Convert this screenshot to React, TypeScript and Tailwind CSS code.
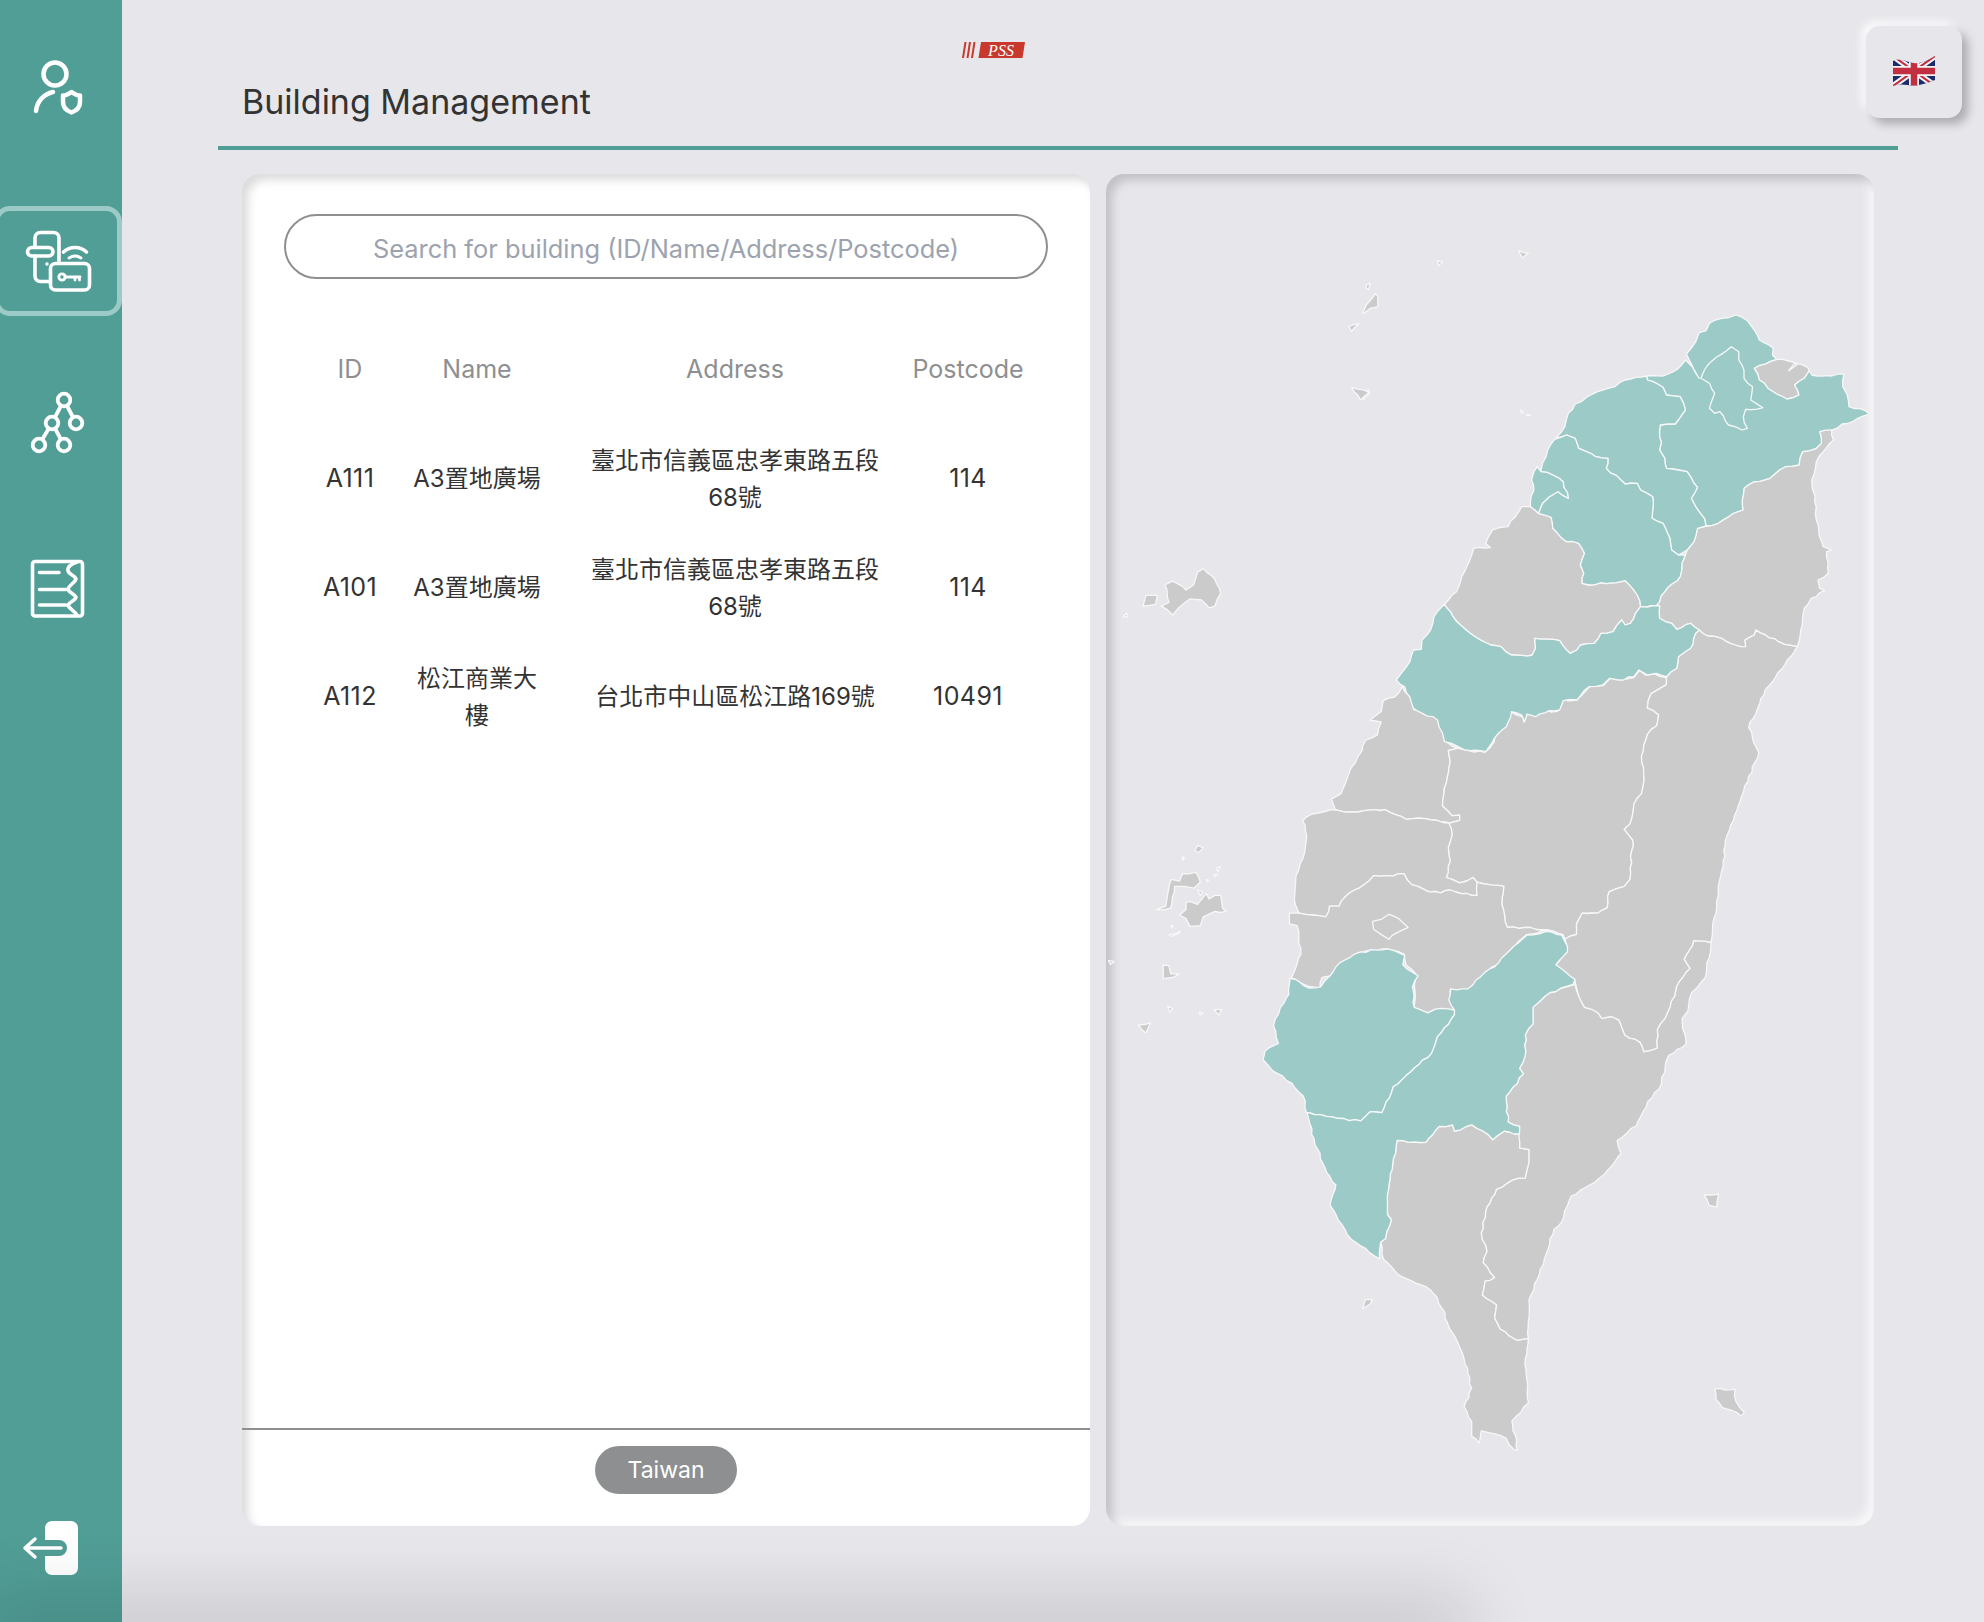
import React from 'react'

// The map is traced in a few local coordinate frames, then mapped to panel pixels
type Frame = [number, number, number, number]
const A: Frame = [1360, 280, 2.904, 3]
const B: Frame = [1100, 540, 2.613, 2.8]
const C: Frame = [1200, 900, 2.613, 2.703]
const S: Frame = [0, 0, 0.79028, 0.79028]

const PANEL_X = 1106
const PANEL_Y = 174

function noise(n: number) {
  const v = Math.sin(n * 127.1) * 43758.5453
  return (v - Math.floor(v)) * 2 - 1
}

// wiggle an edge so coast lines look hand-surveyed; neighbours sharing an edge get the same wiggle
function roughEdge(a: number[], b: number[]) {
  const flip = a[0] > b[0] || (a[0] === b[0] && a[1] > b[1])
  const [p, q] = flip ? [b, a] : [a, b]
  const dx = q[0] - p[0]
  const dy = q[1] - p[1]
  const len = Math.hypot(dx, dy)
  const steps = Math.floor(len / 5)
  const out: number[][] = []
  for (let i = 1; i < steps; i++) {
    const t = i / steps
    const off = noise(p[0] * 3.1 + p[1] * 7.7 + i * 1.37) * 1.1
    out.push([p[0] + dx * t - (dy / len) * off, p[1] + dy * t + (dx / len) * off])
  }
  return flip ? out.reverse() : out
}

function shape(...parts: [Frame, string][]) {
  const pts = parts.flatMap(([f, raw]) =>
    raw
      .trim()
      .split(/\s+/)
      .map((p) => {
        const [x, y] = p.split(',').map(Number)
        return [Number((f[0] + x / f[2] - PANEL_X).toFixed(1)), Number((f[1] + y / f[3] - PANEL_Y).toFixed(1))]
      })
  )
  const out: number[][] = []
  pts.forEach((p, i) => {
    out.push(p, ...roughEdge(p, pts[(i + 1) % pts.length]))
  })
  return out.map((p) => `${p[0].toFixed(1)},${p[1].toFixed(1)}`).join(' ')
}

const teal = [
  // New Taipei
  shape([A, '948,222 975,185 985,158 1005,152 1015,130 1050,115 1092,105 1125,122 1145,150 1160,180 1200,205 1198,225 1210,238 1145,265 1160,300 1200,335 1240,357 1275,345 1262,315 1290,295 1305,272 1312,285 1370,288 1405,282 1402,320 1415,345 1420,380 1450,385 1480,402 1430,425 1400,432 1370,450 1335,455 1340,490 1325,505 1285,515 1275,555 1235,560 1190,595 1145,605 1115,625 1110,660 1112,690 1070,710 1040,730 1005,738 1000,715 975,680 962,655 980,622 950,575 925,570 890,565 885,535 870,510 875,487 870,470 872,435 915,432 945,390 930,350 890,345 880,322 835,300 832,288 880,288 910,275 945,240 965,260 985,295']),
  // Taipei
  shape([A, '1078,200 1100,215 1100,240 1115,270 1115,295 1140,320 1135,360 1170,383 1120,388 1113,410 1125,445 1110,450 1070,435 1045,395 1030,400 1015,385 1030,340 1015,310 990,295 1000,270 1010,255 1035,232']),
  // Taoyuan
  shape([A, '832,288 800,292 770,300 740,320 690,335 660,350 625,372 605,400 595,440 570,472 600,465 625,475 635,505 670,520 685,530 720,535 715,565 770,612 805,610 815,630 850,650 850,690 848,715 880,730 900,775 905,810 925,825 950,810 970,785 980,745 1005,738 1000,715 975,680 962,655 980,622 950,575 925,570 890,565 885,535 870,510 875,487 870,470 872,435 915,432 945,390 930,350 890,345 880,322 835,300']),
  // Hsinchu county
  shape([A, '565,478 545,510 530,550 525,575 560,585 590,605 605,655 575,635 550,650 530,670 518,700 545,708 555,712 560,745 600,785 635,790 652,820 640,855 650,880 645,910 665,915 700,908 745,908 770,902 805,945 815,980 860,978 885,935 930,890 935,850 945,825 925,825 905,810 900,775 880,730 848,715 850,690 850,650 815,630 805,610 770,612 715,565 720,535 685,530 670,520 635,505 625,475 600,465']),
  // Hsinchu city
  shape([A, '515,560 525,575 560,585 590,605 605,655 575,635 550,650 530,670 518,700 495,680 497,650 505,630 498,600 505,575']),
  // Taichung
  shape([A, '245,972 215,1010 205,1050 180,1080 178,1108 155,1110 145,1145 120,1180 105,1200 130,1220 155,1285 225,1320 240,1360 245,1385 285,1400 320,1412 365,1415 390,1375 425,1340 440,1295 470,1305 478,1325 485,1302 510,1310 550,1292 580,1290 590,1262 630,1260 665,1220 705,1215 725,1195 750,1200 795,1190 810,1170 835,1185 860,1180 890,1190 920,1165 925,1130 960,1105 975,1060 985,1050 960,1030 920,1048 905,1030 870,1015 870,978 815,980 800,1000 785,1030 770,1035 760,1020 735,1055 700,1060 680,1090 640,1095 630,1110 610,1120 580,1082 508,1075 510,1105 500,1125 440,1125 410,1100 380,1095 320,1060 270,1010']),
  // Tainan
  shape([C, '235,212 250,215 285,238 315,235 340,205 365,170 420,140 490,132 535,150 530,175 570,205 555,235 560,290 595,305 615,295 665,298 665,310 620,370 605,415 550,465 505,505 475,575 445,572 420,597 360,590 330,585 285,575 278,575 270,530 240,495 190,462 165,432 170,408 205,388 192,340 210,290 232,255']),
  // Kaohsiung
  shape([C, '905,85 945,95 960,125 960,140 930,175 980,215 975,228 915,250 870,290 870,335 850,365 850,420 835,455 845,470 800,530 805,600 835,612 835,632 795,625 765,648 740,625 710,608 665,625 660,608 625,612 590,655 545,655 515,650 505,700 490,795 490,850 500,865 485,915 472,925 470,970 420,935 385,905 340,825 355,770 345,760 300,660 280,578 285,575 330,585 360,590 420,597 445,572 475,575 505,505 550,465 605,415 620,370 665,310 665,298 650,270 655,240 700,240 745,195 780,170 820,125 855,95']),
]

const gray = [
  // Keelung
  shape([A, '1145,265 1210,238 1262,248 1268,255 1245,272 1262,250 1300,262 1305,272 1290,295 1262,315 1275,345 1240,357 1200,335 1160,300']),
  // Yilan
  shape([A, '1400,432 1370,450 1375,480 1345,515 1325,545 1312,600 1325,680 1325,720 1345,800 1370,810 1355,815 1360,880 1330,900 1335,925 1350,932 1310,955 1290,985 1280,1050 1270,1100 1215,1085 1150,1050 1145,1065 1118,1080 1120,1100 1090,1095 1050,1075 1010,1068 985,1050 960,1030 920,1048 905,1030 870,1015 870,978 860,978 885,935 930,890 935,850 945,825 950,810 970,785 980,745 1005,738 1040,730 1070,710 1112,690 1110,660 1115,625 1145,605 1190,595 1235,560 1275,555 1285,515 1325,505 1340,490 1335,455']),
  // Miaoli
  shape([A, '470,680 430,740 385,750 365,790 378,803 330,805 310,860 280,935 245,972 270,1010 320,1060 380,1095 410,1100 440,1125 500,1125 510,1105 508,1075 580,1082 610,1120 630,1110 640,1095 680,1090 700,1060 735,1055 760,1020 770,1035 785,1030 800,1000 815,980 805,945 770,902 745,908 700,908 665,915 645,910 650,880 640,855 652,820 635,790 600,785 560,745 555,712 545,708 518,700 495,680']),
  // Changhua
  shape([B, '790,410 770,440 740,450 735,480 705,505 735,510 725,545 695,560 675,605 655,640 650,655 630,710 605,725 615,755 640,762 690,758 745,755 800,782 850,780 915,792 940,785 940,770 920,772 895,745 905,680 915,620 910,590 935,583 905,565 890,510 875,495 820,475 815,450']),
  // Nantou
  shape([B, '935,583 965,590 1005,595 1030,565 1040,535 1060,520 1072,480 1105,495 1108,510 1115,488 1135,490 1165,478 1195,480 1210,448 1245,448 1280,410 1315,408 1335,385 1370,390 1395,385 1410,365 1425,378 1450,375 1480,385 1480,405 1440,430 1430,470 1460,490 1455,520 1430,545 1415,605 1422,670 1415,710 1395,740 1385,795 1370,810 1392,840 1385,950 1370,970 1330,985 1325,1030 1300,1045 1260,1045 1245,1075 1245,1105 1215,1118 1210,1105 1170,1092 1110,1085 1065,1085 1050,1020 1055,970 985,958 975,945 940,960 920,950 905,945 915,900 910,860 920,825 912,795 915,792 940,785 940,770 920,772 895,745 905,680 915,620 910,590']),
  // Yunlin
  shape([B, '540,775 570,765 605,755 640,762 690,758 745,755 800,782 850,780 912,793 920,825 910,860 915,900 905,945 920,950 940,960 975,945 985,958 985,995 945,990 915,980 890,988 860,985 815,965 795,935 750,940 715,940 690,965 665,980 640,1000 625,1025 600,1025 590,1055 555,1050 520,1045 510,1020 512,940 535,875 540,830 530,785']),
  // Chiayi county
  shape([B, '495,1045 520,1045 555,1050 590,1055 600,1025 625,1025 640,1000 665,980 690,965 715,940 750,940 795,935 815,965 860,985 890,988 915,980 945,990 985,995 985,958 1055,970 1050,1020 1065,1085 1110,1085 1170,1092 1115,1105 1085,1135 1050,1180 1010,1210 965,1260 915,1258 925,1318 890,1312 855,1325 820,1310 825,1215 800,1190 795,1160 750,1145 680,1155 630,1185 605,1220 580,1225 575,1255 545,1250 500,1225 525,1160 515,1080 495,1075']),
  // Chiayi city
  shape([B, '755,1048 780,1060 805,1085 775,1100 755,1118 735,1105 715,1090 712,1068 735,1062']),
  // Pingtung
  shape([C, '515,650 545,655 590,655 625,612 660,608 665,625 710,608 740,625 765,648 795,625 835,632 835,670 860,675 860,710 850,752 815,758 775,782 750,830 735,900 750,950 740,980 770,1020 745,1030 738,1068 775,1095 770,1130 785,1160 830,1190 858,1185 850,1240 855,1300 858,1360 815,1408 830,1488 820,1485 800,1455 755,1440 735,1435 730,1468 710,1450 710,1410 690,1370 710,1320 690,1240 660,1170 620,1075 590,1045 515,1010 490,980 480,972 472,925 485,915 500,865 490,850 490,795 505,700']),
  // Taitung
  shape([C, '980,228 915,250 870,290 870,335 850,365 850,420 835,455 845,470 800,530 805,600 835,612 835,670 860,675 860,710 850,752 815,758 775,782 750,830 735,900 750,950 740,980 770,1020 745,1030 738,1068 775,1095 770,1130 785,1160 830,1190 858,1185 860,1080 900,970 925,890 945,870 970,800 1040,755 1075,720 1100,685 1090,650 1140,610 1170,545 1200,510 1225,420 1270,390 1260,320 1275,300 1285,250 1320,210 1335,115 1290,110 1265,160 1280,185 1245,235 1240,260 1215,320 1195,350 1195,400 1160,410 1150,385 1110,365 1095,325 1075,315 1050,320 1040,305 1005,290 990,260']),
  // Hualien
  shape(
    [A, '1270,1100 1215,1085 1150,1050 1145,1065 1118,1080 1120,1100 1090,1095 1050,1075 1010,1068 985,1050 975,1060 960,1105 925,1130 920,1165 890,1190'],
    [B, '1480,405 1440,430 1430,470 1460,490 1455,520 1430,545 1415,605 1422,670 1415,710 1395,740 1385,795 1370,810 1392,840 1385,950 1370,970 1330,985 1325,1030 1300,1045 1260,1045 1245,1075 1245,1105 1215,1118 1222,1145 1190,1190 1240,1230'],
    [C, '990,260 1005,290 1040,305 1050,320 1075,315 1095,325 1110,365 1150,385 1160,410 1195,400 1195,350 1215,320 1240,260 1245,235 1280,185 1265,160 1290,110 1335,115'],
    [S, '1358,705 1365,660 1378,625 1390,595 1382,575 1395,545 1418,515']
  ),
  // Islands
  shape([B, '235,1012 255,1020 270,1000 278,990 285,1005 300,995 315,995 320,1030 330,1040 300,1040 270,1055 262,1080 235,1082 225,1060 208,1050 225,1035 225,1015']),
  shape([B, '148,1035 172,1025 178,985 186,950 208,955 215,935 250,930 262,958 245,975 220,970 195,970 185,1030']),
  shape([B, '170,125 190,115 225,140 245,125 255,90 270,80 300,110 315,150 300,185 285,190 265,168 235,165 205,190 190,210 160,185 180,175 175,140']),
  shape([B, '112,185 120,155 150,155 145,180']),
  shape([B, '60,215 70,205 72,215']),
  shape([B, '255,855 270,862 258,875 248,870']),
  shape([B, '215,887 221,890 217,897']),
  shape([B, '305,918 314,915 308,930']),
  shape([B, '297,937 307,938 300,943']),
  shape([B, '278,950 284,952 280,957']),
  shape([B, '255,980 268,985 262,995']),
  shape([B, '180,1105 210,1095 205,1102 185,1110']),
  shape([B, '185,1080 192,1080 188,1086']),
  shape([B, '165,1190 180,1192 185,1215 207,1215 190,1225 165,1228']),
  shape([B, '100,1358 132,1352 120,1380']),
  shape([B, '22,1178 37,1180 28,1188']),
  shape([B, '298,1315 318,1315 310,1330']),
  shape([B, '260,1322 270,1325 262,1330']),
  shape([B, '176,1305 190,1312 182,1322']),
  shape([A, '8,100 18,75 35,55 45,40 52,50 52,80 30,85 12,100']),
  shape([A, '8,350 25,328 28,340 10,358']),
  shape([A, '465,390 475,395 470,400']),
  shape([A, '483,403 495,405 485,407']),
  shape([A, '18,15 30,10 25,28 18,25']),
  shape([S, '1066,258 1074,256 1068,262']),
  shape([S, '1068,306 1082,310 1075,316']),
  shape([S, '1200,198 1208,200 1203,204']),
  shape([S, '1136,206 1140,207 1137,210']),
  shape([C, '1317,797 1355,795 1350,830 1330,825 1325,810']),
  shape([C, '1345,1322 1398,1322 1400,1355 1422,1385 1415,1395 1390,1380 1365,1372 1348,1350']),
  shape([C, '425,1105 432,1080 450,1080 445,1092']),
]

function TaiwanMap() {
  return (
    <svg viewBox="0 0 768 1352" className="h-full w-full" fill="none">
      {gray.map((pts, i) => (
        <polygon key={i} points={pts} fill="#cbcbcb" stroke="#f8f8f9" strokeWidth="1.3" strokeLinejoin="round" />
      ))}
      {teal.map((pts, i) => (
        <polygon key={i} points={pts} fill="#9bcac7" stroke="#f8f8f9" strokeWidth="1.3" strokeLinejoin="round" />
      ))}
    </svg>
  )
}

function UserShieldIcon() {
  return (
    <svg viewBox="30 56 56 60" className="h-[60px] w-[56px]" fill="none" stroke="white" strokeWidth="4.500" strokeLinecap="round" strokeLinejoin="round">
      <circle cx="55" cy="73" r="11.5" />
      <path d="M36 110C37 100 44 93 53 91" />
      <path d="M71.5 91C68 93.500 65.500 94.500 63 94.500V101C63 106 66 109.500 71.500 111.500C77 109.500 80 106 80 101V94.500C77.500 94.500 75 93.500 71.500 91Z" />
    </svg>
  )
}

function SmartLockIcon() {
  return (
    <svg viewBox="24 228 68 64" className="h-[64px] w-[68px]" fill="none" stroke="white" strokeWidth="3.600" strokeLinecap="round" strokeLinejoin="round">
      <path d="M35 246V237A5.500 5.500 0 0 1 40.500 231.500H53.500A5.500 5.500 0 0 1 59 237V260" />
      <path d="M35 255V275A5.500 5.500 0 0 0 40.500 280.500H50" />
      <rect x="27.500" y="246.500" width="25.500" height="8.500" rx="4.250" />
      <circle cx="47" cy="263" r="1" fill="white" strokeWidth="1.500" />
      <rect x="50.500" y="262.500" width="39" height="26.500" rx="5" />
      <circle cx="62" cy="276" r="3.200" strokeWidth="2.800" />
      <path d="M65 276H80M75 276V279M79.500 276V279" strokeWidth="2.800" />
      <path d="M63.500 251C70 245 80 245 86.500 251" />
      <path d="M69 257C73 254.500 77.500 254.500 81 257" strokeWidth="2.800" />
    </svg>
  )
}

function NetworkIcon() {
  return (
    <svg viewBox="28 391 60 68" className="h-[68px] w-[60px]" fill="none" stroke="white" strokeWidth="3.800" strokeLinecap="round">
      <path d="M64 400L76 423M64 400L52 423L39 445M52 423L64 445" />
      <g fill="#519e97">
        <circle cx="64" cy="400" r="6.300" />
        <circle cx="52" cy="423" r="6.300" />
        <circle cx="76" cy="423" r="6.300" />
        <circle cx="39" cy="445" r="6.300" />
        <circle cx="64" cy="445" r="6.300" />
      </g>
    </svg>
  )
}

function DocTreeIcon() {
  return (
    <svg viewBox="29 557 58 64" className="h-[64px] w-[58px]" fill="none" stroke="white" strokeWidth="3.600" strokeLinecap="round" strokeLinejoin="round">
      <rect x="32.500" y="561.500" width="50" height="54.500" rx="2.500" />
      <path d="M39.500 572.500H59M39.500 589.500H66M39.500 605H66" />
      <path d="M77 562C71 564 67 567 68 571C69 575 75 575 76 579C75 583 69 585 68 589C69 593 75 594 76 597C75 601 69 602 68 605C69 609 75 611 77 615" />
    </svg>
  )
}

function LogoutIcon() {
  return (
    <svg viewBox="20 1518 60 60" className="h-[60px] w-[60px]" fill="none">
      <path d="M51 1521H70A7 7 0 0 1 77 1528V1568A7 7 0 0 1 70 1575H51A7 7 0 0 1 44 1568V1556H58A8 8 0 0 0 58 1540H44V1528A7 7 0 0 1 51 1521Z" fill="white" />
      <path d="M34 1539L24 1548L34 1557M25 1548H60" stroke="white" strokeWidth="3.500" strokeLinecap="round" strokeLinejoin="round" />
    </svg>
  )
}

function UkFlag() {
  return (
    <svg viewBox="0 0 42 30" className="-mt-[2px] h-[30px] w-[42px]">
      <defs>
        <clipPath id="flag-wave">
          <path d="M0 5C10 1 16 9 26 7C32 6 37 3 42 0V24C36 26 32 28 26 29C16 31 10 26 0 30Z" />
        </clipPath>
      </defs>
      <g clipPath="url(#flag-wave)">
        <rect width="42" height="32" fill="#1c2a6e" />
        <path d="M0 0L42 30M42 0L0 30" stroke="#f5f5f5" strokeWidth="6" />
        <path d="M0 0L42 30M42 0L0 30" stroke="#c4283a" strokeWidth="2" />
        <path d="M21 -2V32M0 15H42" stroke="#f5f5f5" strokeWidth="10" />
        <path d="M21 -2V32M0 15H42" stroke="#c22f40" strokeWidth="6.500" />
      </g>
    </svg>
  )
}

function PssLogo() {
  return (
    <svg viewBox="0 0 63 16" className="h-[16px] w-[63px]">
      <path d="M2.500 0H4.500L2 16H0ZM7 0H9L6.500 16H4.500ZM11.500 0H13.500L11 16H9ZM19 0H63L60.500 16H16.500Z" fill="#c8382c" />
      <text x="39" y="13.500" textAnchor="middle" fontFamily="'Liberation Serif', serif" fontStyle="italic" fontSize="16" fill="#ffffff">
        PSS
      </text>
    </svg>
  )
}

const navItems = [
  { icon: <UserShieldIcon />, active: false },
  { icon: <SmartLockIcon />, active: true },
  { icon: <NetworkIcon />, active: false },
  { icon: <DocTreeIcon />, active: false },
]

const rows = [
  { id: 'A111', name: 'A3置地廣場', address: '臺北市信義區忠孝東路五段68號', postcode: '114' },
  { id: 'A101', name: 'A3置地廣場', address: '臺北市信義區忠孝東路五段68號', postcode: '114' },
  { id: 'A112', name: '松江商業大樓', address: '台北市中山區松江路169號', postcode: '10491' },
]

const rowClass = 'grid grid-cols-[124px_130px_341px_170px] h-[109px] items-center text-center'

export default function App() {
  return (
    <div className="relative flex h-screen w-screen overflow-hidden bg-[#e6e6eb] font-['Inter','Noto_Sans_CJK_TC',sans-serif] text-[24px] leading-[37px] text-[#333333]">
      <aside className="flex h-full w-[122px] shrink-0 flex-col overflow-hidden bg-[#519e97] pt-[32px]">
        <div className="flex flex-col gap-[54px]">
          {navItems.map((item, i) => (
            <div
              key={i}
              className={`-ml-[6px] flex h-[110px] w-[128px] items-center justify-center rounded-[16px] border-[5px] first:mb-[10px] ${item.active ? 'border-[#9ccac7]' : 'border-transparent'}`}
            >
              {item.icon}
            </div>
          ))}
        </div>
        <div className="mt-auto mb-[44px] flex justify-center pr-[20px]">
          <LogoutIcon />
        </div>
      </aside>

      <main className="flex min-w-0 flex-1 flex-col pl-[96px] pr-[86px]">
        <header className="h-[150px] border-b-4 border-[#519e97]">
          <div className="ml-[744px] pt-[42px]">
            <PssLogo />
          </div>
          <h1 className="mt-[21px] pl-[24px] text-[34px] leading-[46px] font-normal text-[#333333]">Building Management</h1>
        </header>

        <div className="mt-[24px] ml-[24px] flex h-[1352px] gap-[16px]">
          <section className="flex w-[848px] flex-col overflow-hidden rounded-[18px] bg-white shadow-[inset_6px_6px_10px_rgba(0,0,0,0.14)]">
            <div className="flex-1 pt-[40px] pl-[42px]">
              <input
                placeholder="Search for building (ID/Name/Address/Postcode)"
                className="h-[65px] w-[764px] rounded-[33px] border-2 border-[#8e8f91] bg-transparent pt-[3px] text-center text-[25.400px] outline-none placeholder:text-[#9ca3af]"
              />
              <div className="mt-[36px] pl-[4px]">
                <div className={`${rowClass} text-[25px] text-[#8e8f91]`}>
                  <div>ID</div>
                  <div>Name</div>
                  <div className="pl-[45px]">Address</div>
                  <div>Postcode</div>
                </div>
                {rows.map((row) => (
                  <div key={row.id} className={rowClass}>
                    <div className="text-[25px] tracking-[0.4px]">{row.id}</div>
                    <div>{row.name}</div>
                    <div className="pl-[45px]">{row.address}</div>
                    <div className="text-[25px] tracking-[0.4px]">{row.postcode}</div>
                  </div>
                ))}
              </div>
            </div>
            <div className="flex h-[98px] justify-center border-t-2 border-[#8e8f91] pt-[16px]">
              <button className="h-[48px] w-[142px] rounded-[24px] bg-[#8e8f91] text-[23px] text-white">Taiwan</button>
            </div>
          </section>

          <section className="w-[768px] overflow-hidden rounded-[18px] bg-[#e6e6eb] shadow-[inset_6px_6px_10px_rgba(0,0,0,0.16),inset_-6px_-6px_10px_rgba(255,255,255,0.7)]">
            <TaiwanMap />
          </section>
        </div>
      </main>

      {/* language switch floats over the header line */}
      <button className="absolute top-[26px] right-[22px] flex h-[92px] w-[96px] items-center justify-center rounded-[14px] bg-[#e6e6eb] shadow-[6px_6px_10px_rgba(0,0,0,0.25),-5px_-5px_10px_rgba(255,255,255,0.8)]">
        <UkFlag />
      </button>

      {/* shadow of something sitting just below the fold */}
      <div className="pointer-events-none absolute top-full left-0 h-[10px] w-[1450px] bg-black/20 shadow-[0_0_70px_20px_rgba(0,0,0,0.16)]" />
    </div>
  )
}
